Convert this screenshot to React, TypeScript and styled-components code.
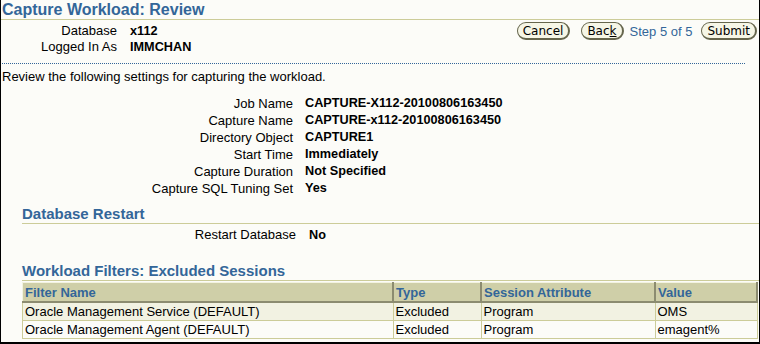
import React from 'react';
import styled, { createGlobalStyle } from 'styled-components';

const GlobalStyle = createGlobalStyle`
  html, body {
    margin: 0;
    padding: 0;
    background: #fcfcf8;
  }
  body {
    font-family: "Liberation Sans", Arial, sans-serif;
    font-size: 13px;
    color: #000;
  }
`;

const Frame = styled.div`
  box-sizing: border-box;
  width: 760px;
  height: 344px;
  border-left: 1px solid #000;
  border-right: 1px solid #000;
  border-bottom: 2px solid #000;
  background: #fcfcf8;
  overflow: hidden;
`;

const Title = styled.h1`
  margin: 0;
  padding: 0 0 0 1px;
  height: 19px;
  line-height: 19px;
  font-size: 16px;
  font-weight: bold;
  color: #336699;
  border-bottom: 1px solid #cccc99;
`;

const TopBar = styled.div`
  display: flex;
  justify-content: space-between;
  align-items: flex-start;
  padding-top: 2px;
  height: 41px;
`;

const InfoGrid = styled.div`
  display: grid;
  grid-template-columns: 116px auto;
  column-gap: 13px;
  grid-auto-rows: 16px;
  line-height: 16px;
  padding-top: 1px;
`;

const Label = styled.div`
  text-align: right;
  color: #000;
  font-size: 13px;
`;

const Value = styled.div`
  font-weight: bold;
  font-size: 12.7px;
  color: #000;
`;

const Actions = styled.div`
  display: flex;
  align-items: center;
  padding-right: 2px;
`;

const Button = styled.button<{ $gap?: number }>`
  margin-left: ${(p) => p.$gap ?? 0}px;
  height: 18px;
  padding: 0 5px;
  font-family: "DejaVu Sans", "Liberation Sans", sans-serif;
  font-size: 12px;
  line-height: 14px;
  color: #000;
  background: #f6f6e6;
  border: 1px solid #66664d;
  border-right-width: 2px;
  border-bottom-width: 2px;
  border-radius: 9px;
  cursor: pointer;
`;

const Step = styled.span`
  margin: 0 9px 0 6px;
  color: #336699;
  font-size: 13px;
`;

const Dotted = styled.div`
  margin: 0 14px 0 1px;
  border-top: 1px dotted #336699;
`;

const Intro = styled.p`
  margin: 5px 0 0 1px;
  line-height: 16px;
`;

const Details = styled.div`
  display: grid;
  grid-template-columns: 292px auto;
  column-gap: 12px;
  grid-auto-rows: 17px;
  line-height: 17px;
  margin-top: 10px;
`;

const Section = styled.h2<{ $top: number }>`
  margin: ${(p) => p.$top}px 0 0 21px;
  font-size: 15px;
  font-weight: bold;
  color: #336699;
  line-height: 17px;
  border-bottom: 1px solid #cccc99;
  padding-bottom: 1px;
`;

const RestartRow = styled.div`
  display: grid;
  grid-template-columns: 295px auto;
  column-gap: 13px;
  line-height: 16px;
  margin-top: 3px;
`;

const Table = styled.table`
  margin: 1px 2px 0 21px;
  width: 736px;
  table-layout: fixed;
  border-collapse: collapse;
  border: 1px solid #cccc99;
`;

const Th = styled.th<{ $w?: number }>`
  width: ${(p) => (p.$w ? `${p.$w}px` : 'auto')};
  height: 18px;
  padding: 0 2px;
  text-align: left;
  font-size: 13px;
  font-weight: bold;
  color: #336699;
  background: #cfcfa8;
  border-right: 2px solid #8c8c70;
  border-bottom: 2px solid #8c8c70;
  border-left: 1px solid #f3f3e0;
  border-top: 1px solid #f3f3e0;
`;

const Td = styled.td<{ $alt?: boolean }>`
  height: 17px;
  padding: 0 2px;
  font-size: 13px;
  line-height: 16px;
  background: ${(p) => (p.$alt ? '#fcfcf8' : '#f2f2e2')};
  border: 1px solid #cccc99;
  white-space: nowrap;
  overflow: hidden;
`;

const details: [string, string][] = [
  ['Job Name', 'CAPTURE-X112-20100806163450'],
  ['Capture Name', 'CAPTURE-x112-20100806163450'],
  ['Directory Object', 'CAPTURE1'],
  ['Start Time', 'Immediately'],
  ['Capture Duration', 'Not Specified'],
  ['Capture SQL Tuning Set', 'Yes'],
];

const filters = [
  ['Oracle Management Service (DEFAULT)', 'Excluded', 'Program', 'OMS'],
  ['Oracle Management Agent (DEFAULT)', 'Excluded', 'Program', 'emagent%'],
];

export default function App() {
  return (
    <>
      <GlobalStyle />
      <Frame>
        <Title>Capture Workload: Review</Title>
        <TopBar>
          <InfoGrid>
            <Label>Database</Label>
            <Value>x112</Value>
            <Label>Logged In As</Label>
            <Value>IMMCHAN</Value>
          </InfoGrid>
          <Actions>
            <Button>Cancel</Button>
            <Button $gap={11}>
              Bac<u>k</u>
            </Button>
            <Step>Step 5 of 5</Step>
            <Button>Submit</Button>
          </Actions>
        </TopBar>
        <Dotted />
        <Intro>Review the following settings for capturing the workload.</Intro>
        <Details>
          {details.map(([k, v]) => (
            <React.Fragment key={k}>
              <Label>{k}</Label>
              <Value>{v}</Value>
            </React.Fragment>
          ))}
        </Details>
        <Section $top={8}>Database Restart</Section>
        <RestartRow>
          <Label>Restart Database</Label>
          <Value>No</Value>
        </RestartRow>
        <Section $top={19}>Workload Filters: Excluded Sessions</Section>
        <Table>
          <thead>
            <tr>
              <Th $w={365}>Filter Name</Th>
              <Th $w={82}>Type</Th>
              <Th $w={168}>Session Attribute</Th>
              <Th>Value</Th>
            </tr>
          </thead>
          <tbody>
            {filters.map((row, i) => (
              <tr key={row[0]}>
                {row.map((c) => (
                  <Td key={c} $alt={i === 1}>
                    {c}
                  </Td>
                ))}
              </tr>
            ))}
          </tbody>
        </Table>
      </Frame>
    </>
  );
}
